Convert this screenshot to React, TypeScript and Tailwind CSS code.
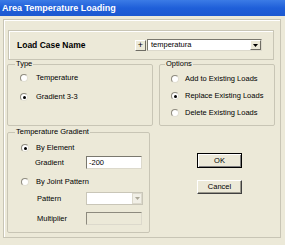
import React from 'react';

function Radio({ label, checked = false, pad, gap }: { label: string; checked?: boolean; pad: string; gap: string }) {
  return (
    <div className={`flex items-center h-[12px] ${pad}`}>
      <span className="w-[8px] h-[8px] rounded-full border border-t-[#8d8a7e] border-l-[#8d8a7e] border-r-[#e2dfd2] border-b-[#e2dfd2] bg-white flex items-center justify-center shrink-0">
        {checked && <span className="w-[3px] h-[3px] rounded-full bg-black" />}
      </span>
      <span className={`text-[7.5px] leading-none text-black ${gap}`}>{label}</span>
    </div>
  );
}

function Arrow({ color }: { color: string }) {
  return (
    <svg width="5" height="3" viewBox="0 0 5 3">
      <polygon points="0,0 5,0 2.5,3" fill={color} />
    </svg>
  );
}

export default function App() {
  return (
    <div className="w-[285px] h-[245px] bg-[#ece9d8] overflow-hidden font-['Liberation_Sans',Arial,sans-serif] text-black">
      {/* Title bar */}
      <div className="h-[16px] flex items-center pl-[2px] bg-gradient-to-b from-[#3b7be6] via-[#1f5fd9] to-[#1c58d0]">
        <span className="text-white font-bold text-[9px] leading-none">Area Temperature Loading</span>
      </div>

      {/* Dialog frame */}
      <div className="mt-[3px] ml-[3px] w-[278px] h-[219px] border border-[#c8c5b5] shadow-[inset_1px_1px_0_#ffffff]">
        {/* Load case */}
        <div className="mt-[10px] ml-[4px] w-[266px] h-[30px] border border-[#c8c5b5] shadow-[inset_1px_1px_0_#ffffff] flex items-center pl-[8px]">
          <span className="w-[118px] font-bold text-[8.5px] leading-none">Load Case Name</span>
          <div className="w-[11px] h-[11px] flex items-center justify-center border border-t-white border-l-white border-r-[#6f6d64] border-b-[#6f6d64] text-[9px] leading-none">+</div>
          <div className="ml-[1px] w-[115px] h-[12px] flex items-center bg-white border border-t-[#7a786e] border-l-[#7a786e] border-r-[#dcd9cc] border-b-[#dcd9cc]">
            <span className="flex-1 pl-[3px] text-[7.5px] leading-none">temperatura</span>
            <div className="w-[11px] h-[10px] flex items-center justify-center bg-[#ece9d8] border border-t-white border-l-white border-r-[#6f6d64] border-b-[#6f6d64]">
              <Arrow color="#000" />
            </div>
          </div>
        </div>

        {/* Type / Options */}
        <div className="flex ml-[3px]">
          <fieldset className="w-[146px] h-[66px] border border-[#c8c5b5] rounded-[2px]">
            <legend className="ml-[7px] px-[1px] text-[7.5px] leading-[8px]">Type</legend>
            <div className="pt-[4px] flex flex-col gap-[7px]">
              <Radio label="Temperature" pad="pl-[12px]" gap="ml-[8px]" />
              <Radio label="Gradient 3-3" checked pad="pl-[12px]" gap="ml-[8px]" />
            </div>
          </fieldset>
          <fieldset className="ml-[6px] w-[116px] h-[66px] border border-[#c8c5b5] rounded-[2px]">
            <legend className="ml-[5px] px-[1px] text-[7.5px] leading-[8px]">Options</legend>
            <div className="pt-[5px] flex flex-col gap-[5px]">
              <Radio label="Add to Existing Loads" pad="pl-[11px]" gap="ml-[6px]" />
              <Radio label="Replace Existing Loads" checked pad="pl-[11px]" gap="ml-[6px]" />
              <Radio label="Delete Existing Loads" pad="pl-[11px]" gap="ml-[6px]" />
            </div>
          </fieldset>
        </div>

        {/* Temperature gradient / buttons */}
        <div className="flex ml-[3px] mt-[2px]">
          <fieldset className="w-[143px] h-[105px] border border-[#c8c5b5] rounded-[2px]">
            <legend className="ml-[7px] px-[1px] text-[7.5px] leading-[8px]">Temperature Gradient</legend>
            <div className="pt-[6px] flex flex-col">
              <Radio label="By Element" checked pad="pl-[13px]" gap="ml-[7px]" />
              <div className="mt-[2px] flex items-center pl-[27px]">
                <span className="w-[51px] text-[7.5px] leading-none">Gradient</span>
                <div className="w-[56px] h-[13px] flex items-center bg-white border border-t-[#7a786e] border-l-[#7a786e] border-r-[#dcd9cc] border-b-[#dcd9cc] pl-[2px] text-[7.5px] leading-none">
                  -200
                </div>
              </div>
              <Radio label="By Joint Pattern" pad="pl-[13px] mt-[7px]" gap="ml-[7px]" />
              <div className="mt-[4px] flex items-center pl-[29px]">
                <span className="w-[49px] text-[7.5px] leading-none">Pattern</span>
                <div className="w-[57px] h-[13px] flex items-center justify-end bg-white border border-[#c9c6b8]">
                  <div className="w-[10px] h-[11px] flex items-center justify-center bg-[#f1efe6] border border-[#dcd9cc]">
                    <Arrow color="#aca899" />
                  </div>
                </div>
              </div>
              <div className="mt-[7px] flex items-center pl-[29px]">
                <span className="w-[49px] text-[7.5px] leading-none">Multiplier</span>
                <div className="w-[56px] h-[13px] bg-[#ece9d8] border border-t-[#8d8a7e] border-l-[#8d8a7e] border-r-[#dcd9cc] border-b-[#dcd9cc]" />
              </div>
            </div>
          </fieldset>

          <div className="ml-[47px] mt-[25px] flex flex-col gap-[12px]">
            <div className="w-[45px] h-[15px] flex items-center justify-center border border-black shadow-[inset_1px_1px_0_#ffffff,inset_-1px_-1px_0_#808080] text-[7.5px] leading-none">
              OK
            </div>
            <div className="w-[45px] h-[14px] flex items-center justify-center border border-t-white border-l-white border-r-[#404040] border-b-[#404040] shadow-[inset_-1px_-1px_0_#9a988c] text-[7.5px] leading-none">
              Cancel
            </div>
          </div>
        </div>
      </div>
    </div>
  );
}
